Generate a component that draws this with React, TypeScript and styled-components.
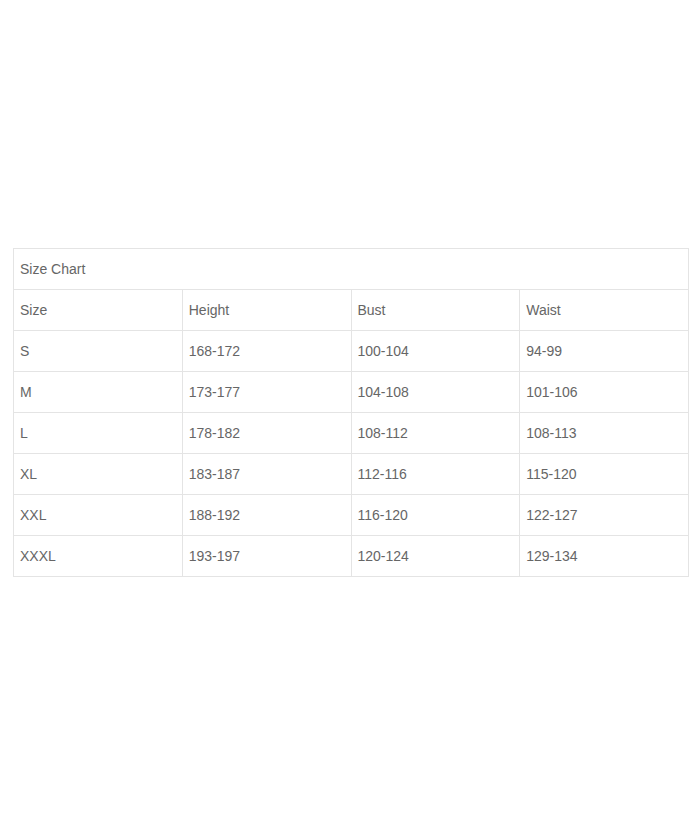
import React from "react";
import styled, { createGlobalStyle } from "styled-components";

const GlobalStyle = createGlobalStyle`
  html, body {
    margin: 0;
    padding: 0;
    background: #ffffff;
  }
  body {
    font-family: "Liberation Sans", Arial, sans-serif;
  }
`;

const Page = styled.div`
  min-height: 100vh;
  display: flex;
  align-items: center;
  padding: 2px 11px 0 13px;
  box-sizing: border-box;
`;

const Table = styled.table`
  width: 100%;
  border-collapse: collapse;
  table-layout: fixed;
  border: 1px solid #e4e4e4;
`;

const Cell = styled.td`
  height: 41px;
  padding: 0 0 0 6px;
  border: 1px solid #e4e4e4;
  font-size: 14px;
  color: #666666;
  text-align: left;
  vertical-align: middle;
  box-sizing: border-box;
`;

const rows = [
  ["Size", "Height", "Bust", "Waist"],
  ["S", "168-172", "100-104", "94-99"],
  ["M", "173-177", "104-108", "101-106"],
  ["L", "178-182", "108-112", "108-113"],
  ["XL", "183-187", "112-116", "115-120"],
  ["XXL", "188-192", "116-120", "122-127"],
  ["XXXL", "193-197", "120-124", "129-134"],
];

export default function App() {
  return (
    <>
      <GlobalStyle />
      <Page>
        <Table>
          <tbody>
            <tr>
              <Cell colSpan={4}>Size Chart</Cell>
            </tr>
            {rows.map((row) => (
              <tr key={row[0]}>
                {row.map((value, i) => (
                  <Cell key={i}>{value}</Cell>
                ))}
              </tr>
            ))}
          </tbody>
        </Table>
      </Page>
    </>
  );
}
